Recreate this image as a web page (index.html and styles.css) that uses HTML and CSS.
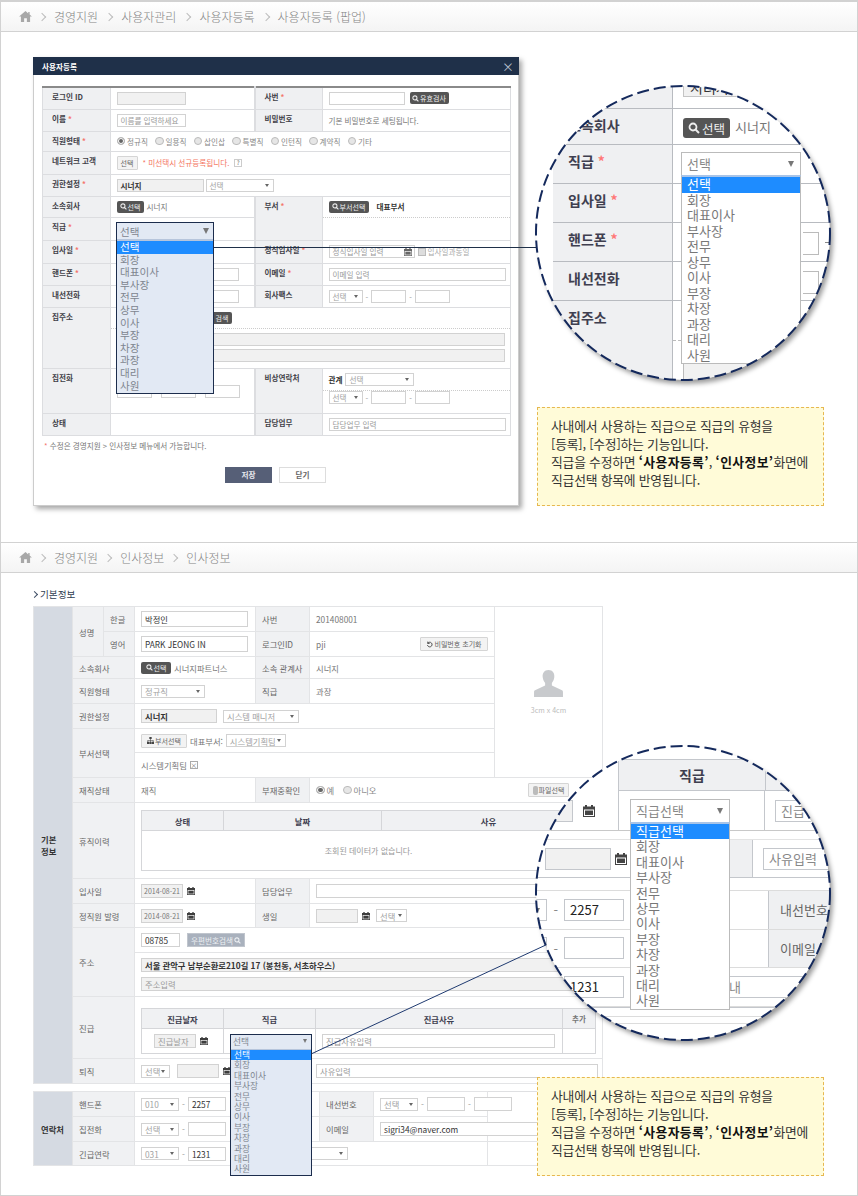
FILE: index.html
```html
<!DOCTYPE html>
<html lang="ko">
<head>
    <meta charset="utf-8">
    <title>사용자등록 / 인사정보</title>
    <link rel="stylesheet" href="styles.css">
</head>
<body>
    <svg class="defs" width="0" height="0">
        <symbol id="i-home" viewBox="0 0 14 12"><path d="M7 0 0 6h2v6h3.500V8h3v4H12V6h2l-2.500-2.100V1h-1.500v1.600z"/></symbol>
        <symbol id="i-search" viewBox="0 0 12 12"><circle cx="5" cy="5" r="3.500" fill="none" stroke="currentColor" stroke-width="1.800"/><path d="m7.500 7.500 3.500 3.500" stroke="currentColor" stroke-width="2"/></symbol>
        <symbol id="i-cal" viewBox="0 0 12 12"><path d="M2 0h2v1.500h4V0h2v1.500h2V12H0V1.500h2zM1 4.500V11h10V4.500z"/><path d="M2 5.500h8v4.500H2z"/></symbol>
    </svg>

    <!-- 사용자등록 (팝업) -->
    <section class="panel panel-top">
        <div class="crumbs">
            <svg class="home"><use href="#i-home"/></svg>
            <i class="sep"></i><span>경영지원</span>
            <i class="sep"></i><span>사용자관리</span>
            <i class="sep"></i><span>사용자등록</span>
            <i class="sep"></i><span>사용자등록 (팝업)</span>
        </div>
        <div class="modal">
            <div class="modal-head"><b>사용자등록</b><span class="modal-x">×</span></div>
            <div class="modal-body">
                <table class="form">
                    <colgroup><col class="c68"><col class="c144"><col class="c68"><col></colgroup>
                    <tr class="h22">
                        <th>로그인 ID</th>
                        <td><div class="cell"><span class="in gray w69"></span></div></td>
                        <th>사번 <i>*</i></th>
                        <td><div class="cell gap5"><span class="in w76"></span><span class="btn w39"><svg class="ic"><use href="#i-search"/></svg>유효검사</span></div></td>
                    </tr>
                    <tr class="h22">
                        <th>이름 <i>*</i></th>
                        <td><div class="cell"><span class="in w69">이름를 입력하세요</span></div></td>
                        <th>비밀번호</th>
                        <td><div class="cell txt">기본 비밀번호로 세팅됩니다.</div></td>
                    </tr>
                    <tr class="h20">
                        <th>직원형태 <i>*</i></th>
                        <td colspan="3"><div class="cell radios">
                            <span class="rad on">정규직</span><span class="rad">일용직</span><span class="rad">삽인삽</span><span class="rad">특별직</span><span class="rad">인턴직</span><span class="rad">계약직</span><span class="rad">기타</span>
                        </div></td>
                    </tr>
                    <tr class="h23">
                        <th>네트워크 고객</th>
                        <td colspan="3"><div class="cell"><span class="btn-w w21">선택</span><span class="warn">* 미선택시 선규등록됩니다.</span><span class="help">?</span></div></td>
                    </tr>
                    <tr class="h22">
                        <th>권한설정 <i>*</i></th>
                        <td colspan="3"><div class="cell tight"><span class="in gray strong w87">시너지</span><span class="sel w68">선택</span></div></td>
                    </tr>
                    <tr class="h21">
                        <th>소속회사</th>
                        <td><div class="cell"><span class="btn w27"><svg class="ic"><use href="#i-search"/></svg>선택</span><span class="txt">시너지</span></div></td>
                        <th rowspan="2">부서 <i>*</i></th>
                        <td rowspan="2" class="split">
                            <div class="cell part p21"><span class="btn w40"><svg class="ic"><use href="#i-search"/></svg>부서선택</span><b class="strong gap3">대표부서</b></div>
                            <div class="part p22"></div>
                        </td>
                    </tr>
                    <tr class="h22">
                        <th>직급 <i>*</i></th>
                        <td></td>
                    </tr>
                    <tr class="h23">
                        <th>입사일 <i>*</i></th>
                        <td></td>
                        <th>정식입사일 <i>*</i></th>
                        <td><div class="cell"><span class="in w86 has-cal">정식입사일 입력<svg class="ic-cal"><use href="#i-cal"/></svg></span><span class="check">입사일과동일</span></div></td>
                    </tr>
                    <tr class="h22">
                        <th>핸드폰 <i>*</i></th>
                        <td><div class="cell end"><span class="in w35"></span></div></td>
                        <th>이메일 <i>*</i></th>
                        <td><div class="cell"><span class="in w177">이메일 입력</span></div></td>
                    </tr>
                    <tr class="h22">
                        <th>내선전화</th>
                        <td><div class="cell end"><span class="in w35"></span></div></td>
                        <th>회사팩스</th>
                        <td><div class="cell phone"><span class="sel w34">선택</span>-<span class="in w35"></span>-<span class="in w35"></span></div></td>
                    </tr>
                    <tr class="h61">
                        <th>집주소</th>
                        <td colspan="3" class="split">
                            <div class="cell part p21"><span class="btn w60 btn-end">검색</span></div>
                            <div class="part addr"><span class="in gray"></span><span class="in gray"></span></div>
                        </td>
                    </tr>
                    <tr class="h45">
                        <th>집전화</th>
                        <td><div class="cell low"><span class="in w35"></span><span class="in w35"></span><span class="in w35"></span></div></td>
                        <th>비상연락처</th>
                        <td class="split">
                            <div class="cell part p22"><b class="strong">관계</b><span class="sel w69">선택</span></div>
                            <div class="cell phone"><span class="sel w34">선택</span>-<span class="in w35"></span>-<span class="in w35"></span></div>
                        </td>
                    </tr>
                    <tr class="h22">
                        <th>상태</th>
                        <td></td>
                        <th>담당업무</th>
                        <td><div class="cell"><span class="in w177">담당업무 입력</span></div></td>
                    </tr>
                </table>
                <p class="note"><i>*</i> 수정은 경영지원 &gt; 인사정보 메뉴에서 가능합니다.</p>
                <div class="actions"><span class="save">저장</span><span class="close">닫기</span></div>
            </div>
        </div>

        <div class="wire"></div>
        <div class="drop drop-a">
            <div class="drop-head">선택</div>
            <ul>
                <li class="cur">선택</li><li>회장</li><li>대표이사</li><li>부사장</li><li>전무</li><li>상무</li><li>이사</li><li>부장</li><li>차장</li><li>과장</li><li>대리</li><li>사원</li>
            </ul>
        </div>

        <div class="lens lens-a">
            <div class="lens-clip">
                <div class="la-rows">
                    <div class="la-row la-0"><div class="la-lab"></div><div class="la-val"><span class="la-in">시너지</span></div></div>
                    <div class="la-row la-1"><div class="la-lab">소속회사</div><div class="la-val"><span class="la-btn"><svg class="ic-l"><use href="#i-search"/></svg>선택</span><span class="la-txt">시너지</span></div></div>
                    <div class="la-row la-2"><div class="la-lab">직급 <i>*</i></div><div class="la-val"></div></div>
                    <div class="la-row la-2"><div class="la-lab">입사일 <i>*</i></div><div class="la-val"></div></div>
                    <div class="la-row la-2"><div class="la-lab">핸드폰 <i>*</i></div><div class="la-val la-end"><span class="la-box"></span><span class="la-dash"></span></div></div>
                    <div class="la-row la-2"><div class="la-lab">내선전화</div><div class="la-val la-end"><span class="la-box"></span></div></div>
                    <div class="la-row la-3"><div class="la-lab">집주소</div><div class="la-val la-addr"></div></div>
                </div>
                <div class="drop drop-b">
                    <div class="drop-head">선택</div>
                    <ul>
                        <li class="cur">선택</li><li>회장</li><li>대표이사</li><li>부사장</li><li>전무</li><li>상무</li><li>이사</li><li>부장</li><li>차장</li><li>과장</li><li>대리</li><li>사원</li>
                    </ul>
                </div>
            </div>
            <svg class="lens-ring" viewBox="0 0 298 298"><circle cx="149" cy="149" r="147"/></svg>
        </div>

        <div class="memo memo-a">
            사내에서 사용하는 직급으로 직급의 유형을<br>
            [등록], [수정]하는 기능입니다.<br>
            직급을 수정하면 <b>‘사용자등록’</b>, <b>‘인사정보’</b>화면에<br>
            직급선택 항목에 반영됩니다.
        </div>
    </section>

    <!-- 인사정보 -->
    <section class="panel panel-bottom">
        <div class="crumbs crumbs-b">
            <svg class="home"><use href="#i-home"/></svg>
            <i class="sep"></i><span>경영지원</span>
            <i class="sep"></i><span>인사정보</span>
            <i class="sep"></i><span>인사정보</span>
        </div>
        <div class="hr-body">
            <h3 class="hr-title"><i class="sep sep-dark"></i>기본정보</h3>
            <table class="hr">
                <colgroup><col class="c39"><col class="c31"><col class="c31"><col class="c121"><col class="c54"><col class="c185"><col class="c108"></colgroup>
                <tr class="h25">
                    <th class="group" rowspan="15">기본<br>정보</th>
                    <th rowspan="2">성명</th><th class="ctr">한글</th>
                    <td><div class="cell"><span class="in dark w107">박정인</span></div></td>
                    <th>사번</th><td><div class="cell txt">201408001</div></td>
                    <td rowspan="7" class="photo">
                        <svg class="avatar" viewBox="0 0 30 28"><path d="M15 0c-4.500 0-6.500 3.500-6 7.500.3 2.500 1.300 4.500 2.500 6v2.500L1 21c-.7.500-1 1-1 2v5h30v-5c0-1-.3-1.500-1-2l-10.500-5v-2.500c1.200-1.500 2.200-3.500 2.500-6C21.500 3.500 19.500 0 15 0z"/></svg>
                        <span>3cm x 4cm</span>
                    </td>
                </tr>
                <tr class="h25">
                    <th class="ctr">영어</th>
                    <td><div class="cell"><span class="in dark w107">PARK JEONG IN</span></div></td>
                    <th>로그인ID</th>
                    <td><div class="cell txt"><span>pji</span><span class="btn-w w68 push"><svg class="ic" viewBox="0 0 12 12"><path d="M3 4a4 4 0 1 1-.5 3M3 1v3.200h3.200" fill="none" stroke="#333" stroke-width="1.400"/></svg>비밀번호 초기화</span></div></td>
                </tr>
                <tr class="h22">
                    <th colspan="2">소속회사</th>
                    <td><div class="cell"><span class="btn w30"><svg class="ic"><use href="#i-search"/></svg>선택</span><span class="txt">시너지파트너스</span></div></td>
                    <th>소속 관계사</th><td><div class="cell txt">시너지</div></td>
                </tr>
                <tr class="h25">
                    <th colspan="2">직원형태</th>
                    <td><div class="cell"><span class="sel w64">정규직</span></div></td>
                    <th>직급</th><td><div class="cell txt">과장</div></td>
                </tr>
                <tr class="h25">
                    <th colspan="2">권한설정</th>
                    <td colspan="3"><div class="cell tight6"><span class="in gray strong w76">시너지</span><span class="sel w76">시스템 매니저</span></div></td>
                </tr>
                <tr class="h24">
                    <th colspan="2" rowspan="2">부서선택</th>
                    <td colspan="3"><div class="cell"><span class="btn-w w46"><svg class="ic" viewBox="0 0 12 12"><path d="M4 0h4v3.500H6.500v1.500H11v3h1v4H8.500V8H10V6H6.500v2H8v4H4V8h1.500V6H2v2h1.500v4H0V8h1V5h4.500V3.500H4z" fill="#444"/></svg>부서선택</span><span class="txt">대표부서:</span><span class="sel w60">시스템기획팀</span></div></td>
                </tr>
                <tr class="h25">
                    <td colspan="3"><div class="cell txt">시스템기획팀<span class="xbox">×</span></div></td>
                </tr>
                <tr class="h25">
                    <th colspan="2">재직상태</th>
                    <td><div class="cell txt">재직</div></td>
                    <th>부재중확인</th>
                    <td colspan="2"><div class="cell radios wide"><span class="rad on">예</span><span class="rad">아니오</span><span class="btn-w w41 push pad33"><i class="clip"></i>파일선택</span></div></td>
                </tr>
                <tr class="h76">
                    <th colspan="2">휴직이력</th>
                    <td colspan="4" class="pad">
                        <table class="inner">
                            <colgroup><col class="c82"><col class="c158"><col></colgroup>
                            <tr class="h20"><th>상태</th><th>날짜</th><th>사유</th></tr>
                            <tr class="h40"><td colspan="3" class="empty">조회된 데이터가 없습니다.</td></tr>
                        </table>
                    </td>
                </tr>
                <tr class="h25">
                    <th colspan="2">입사일</th>
                    <td><div class="cell"><span class="in gray w42 date">2014-08-21</span><svg class="ic-cal-b"><use href="#i-cal"/></svg></div></td>
                    <th>담당업무</th>
                    <td colspan="2"><div class="cell"><span class="in w282"></span></div></td>
                </tr>
                <tr class="h24">
                    <th colspan="2">정직원 발령</th>
                    <td><div class="cell"><span class="in gray w42 date">2014-08-21</span><svg class="ic-cal-b"><use href="#i-cal"/></svg></div></td>
                    <th>생일</th>
                    <td colspan="2"><div class="cell"><span class="in gray w42"></span><svg class="ic-cal-b"><use href="#i-cal"/></svg><span class="sel w31">선택</span></div></td>
                </tr>
                <tr class="h25">
                    <th colspan="2" rowspan="2">주소</th>
                    <td colspan="4"><div class="cell"><span class="in dark w39">08785</span><span class="btn-b">우편번호검색<svg class="ic"><use href="#i-search"/></svg></span></div></td>
                </tr>
                <tr class="h44">
                    <td colspan="4"><div class="addr addr-b"><span class="in gray strong">서울 관악구 남부순환로210길 17 (봉천동, 서초하우스)</span><span class="in gray">주소입력</span></div></td>
                </tr>
                <tr class="h62">
                    <th colspan="2">진급</th>
                    <td colspan="4" class="pad pad-b">
                        <table class="inner">
                            <colgroup><col class="c82"><col class="c92"><col><col class="c33"></colgroup>
                            <tr class="h20"><th>진급날자</th><th>직급</th><th>진급사유</th><th class="soft">추가</th></tr>
                            <tr class="h25">
                                <td><div class="cell ctrd"><span class="in gray w42">진급날자</span><svg class="ic-cal-b"><use href="#i-cal"/></svg></div></td>
                                <td></td>
                                <td><div class="cell"><span class="in w233">진급사유입력</span></div></td>
                                <td></td>
                            </tr>
                        </table>
                    </td>
                </tr>
                <tr class="h25">
                    <th colspan="2">퇴직</th>
                    <td><div class="cell"><span class="sel w29 gap-r">선택</span><span class="in gray w42"></span><svg class="ic-cal-b"><use href="#i-cal"/></svg></div></td>
                    <th></th>
                    <td colspan="2"><div class="cell"><span class="in w282">사유입력</span></div></td>
                </tr>
            </table>

            <table class="hr hr-contact">
                <colgroup><col class="c39"><col class="c62"><col class="c185"><col class="c54"><col></colgroup>
                <tr class="h25">
                    <th class="group" rowspan="3">연락처</th>
                    <th>핸드폰</th>
                    <td><div class="cell phone ph-b"><span class="sel w38">010</span>-<span class="in dark w38">2257</span></div></td>
                    <th>내선번호</th>
                    <td><div class="cell phone ph-b"><span class="sel w38">선택</span>-<span class="in w38"></span>-<span class="in w38"></span></div></td>
                </tr>
                <tr class="h25">
                    <th>집전화</th>
                    <td><div class="cell phone ph-b"><span class="sel w38">선택</span>-<span class="in w38"></span></div></td>
                    <th>이메일</th>
                    <td><div class="cell"><span class="in dark w216">sigri34@naver.com</span></div></td>
                </tr>
                <tr class="h24">
                    <th>긴급연락</th>
                    <td colspan="3"><div class="cell phone ph-b"><span class="sel w38">031</span>-<span class="in dark w38">1231</span><span class="sel w91 gap28"></span></div></td>
                    <td></td>
                </tr>
            </table>
        </div>

        <svg class="wire-b" width="240" height="112"><line x1="1" y1="111" x2="238" y2="1"/></svg>
        <div class="drop drop-c">
            <div class="drop-head">선택</div>
            <ul>
                <li class="cur">선택</li><li>회장</li><li>대표이사</li><li>부사장</li><li>전무</li><li>상무</li><li>이사</li><li>부장</li><li>차장</li><li>과장</li><li>대리</li><li>사원</li>
            </ul>
        </div>

        <div class="lens lens-b">
            <div class="lens-clip">
                <div class="lb-a">
                    <div></div><div class="lb-head">직급</div><div class="lb-head lb-headr"></div>
                    <div class="lb-c1"><span class="lb-box gray"></span><svg class="ic-cal-l"><use href="#i-cal"/></svg></div>
                    <div class="lb-c2"></div>
                    <div class="lb-c3"><span class="lb-box">진급</span></div>
                </div>
                <div class="lb-b">
                    <div class="lb-c1b"><span class="lb-box gray lb-w66"></span><svg class="ic-cal-l"><use href="#i-cal"/></svg></div>
                    <div class="lb-lab"></div>
                    <div class="lb-c3"><span class="lb-box lb-w70">사유입력</span></div>
                </div>
                <div class="lb-c">
                    <div class="lb-row"><div class="lb-val"><span class="lb-sel lb-arrow"></span><span class="lb-dash">-</span><span class="lb-box dark">2257</span></div><div class="lb-lab2">내선번호</div></div>
                    <div class="lb-row"><div class="lb-val"><span class="lb-sel"></span><span class="lb-dash">-</span><span class="lb-box"></span></div><div class="lb-lab2">이메일</div></div>
                    <div class="lb-row"><div class="lb-val"><span class="lb-box dark">1231</span><span class="lb-box lb-far">안내</span></div><div></div></div>
                </div>
                <div class="lb-foot"></div>
                <div class="drop drop-d">
                    <div class="drop-head">직급선택</div>
                    <ul>
                        <li class="cur">직급선택</li><li>회장</li><li>대표이사</li><li>부사장</li><li>전무</li><li>상무</li><li>이사</li><li>부장</li><li>차장</li><li>과장</li><li>대리</li><li>사원</li>
                    </ul>
                </div>
            </div>
            <svg class="lens-ring" viewBox="0 0 298 298"><circle cx="149" cy="149" r="147"/></svg>
        </div>

        <div class="memo memo-b">
            사내에서 사용하는 직급으로 직급의 유형을<br>
            [등록], [수정]하는 기능입니다.<br>
            직급을 수정하면 <b>‘사용자등록’</b>, <b>‘인사정보’</b>화면에<br>
            직급선택 항목에 반영됩니다.
        </div>
    </section>
</body>
</html>
```

FILE: styles.css
```css
* {
    box-sizing: border-box;
}
html, body {
    margin: 0;
    padding: 0;
}
body {
    width: 858px;
    height: 1196px;
    overflow: hidden;
    background: #fff;
    font-family: "Noto Sans CJK KR", "Noto Sans", sans-serif;
    color: #666;
}
.defs {
    position: absolute;
}

/* panels and breadcrumb */
.panel {
    position: relative;
    border: 1px solid #d2d2d2;
    border-bottom: 0;
    overflow: hidden;
}
.panel-top {
    height: 542px;
    border-top-width: 2px;
}
.panel-bottom {
    height: 654px;
    border-bottom: 1px solid #d2d2d2;
}
.crumbs {
    display: flex;
    align-items: center;
    height: 30px;
    padding-left: 18px;
    background: linear-gradient(#fff, #f4f4f4);
    border-bottom: 1px solid #d2d2d2;
    font-size: 12px;
    font-weight: 300;
    color: #858585;
}
.crumbs span {
    margin-right: 8px;
}
.crumbs-b span {
    margin-right: 7px;
}
.home {
    width: 13px;
    height: 11px;
    fill: #a8a8a8;
    margin-right: 7px;
}
.sep {
    display: inline-block;
    width: 6px;
    height: 6px;
    margin-right: 9px;
    border-top: 1px solid #bdbdbd;
    border-right: 1px solid #bdbdbd;
    transform: rotate(45deg);
}
.sep-dark {
    width: 5px;
    height: 5px;
    margin: 0 3px 0 -1px;
    border-width: 1.500px;
    border-color: #3d4c63;
}

/* popup window */
.modal {
    width: 486px;
    height: 449px;
    margin: 25px 0 0 32px;
    background: #fff;
    border: 1px solid #ccc;
    box-shadow: 3px 3px 5px rgba(0, 0, 0, 0.35);
}
.modal-head {
    display: flex;
    justify-content: space-between;
    align-items: center;
    height: 18px;
    margin: -1px -1px 0;
    padding: 0 5px 0 9px;
    background: #1f3049;
    color: #fff;
    font-size: 7.600px;
}
.modal-x {
    font-size: 12px;
    color: #b9c0cc;
}
.modal-body {
    padding: 11px 7px 0 8px;
}
table {
    border-collapse: collapse;
    table-layout: fixed;
}
.form {
    width: 469px;
    border-top: 2px solid #8a8a8a;
    border-bottom: 1px solid #c6c8cc;
    font-size: 7.600px;
}
.c68 { width: 68px; }
.c144 { width: 144px; }
.c39 { width: 39px; }
.c31 { width: 31px; }
.c121 { width: 121px; }
.c54 { width: 54px; }
.c185 { width: 185px; }
.c108 { width: 108px; }
.c62 { width: 62px; }
.c82 { width: 82px; }
.c158 { width: 158px; }
.c92 { width: 92px; }
.c33 { width: 33px; }
.h20 { height: 20px; }
.h21 { height: 21px; }
.h22 { height: 22px; }
.h23 { height: 23px; }
.h24 { height: 24px; }
.h25 { height: 25px; }
.h40 { height: 40px; }
.h44 { height: 44px; }
.h45 { height: 45px; }
.h61 { height: 61px; }
.h62 { height: 62px; }
.h76 { height: 76px; }
.form th, .form td {
    padding: 0;
    border: 1px solid #dcdde0;
}
.form th {
    padding: 3px 0 0 9px;
    background: #eff0f2;
    color: #3f3f48;
    text-align: left;
    vertical-align: top;
    font-weight: 700;
}
.form tr > th:not(:first-child) {
    border-left: 2px solid #dcdde0;
}
.form th i, .note i {
    color: #f4766b;
    font-style: normal;
}
.cell {
    display: flex;
    align-items: center;
    gap: 3px;
    padding: 0 5.500px;
    min-width: 0;
}
.tight { gap: 2px; }
.tight6 { gap: 6px; }
.gap5 { gap: 5px; }
.end { justify-content: flex-end; padding-right: 15px; }
.low { padding-top: 2px; gap: 9px; justify-content: flex-start; }
.txt { color: #777; gap: 3px; }
.gap3 { margin-left: 5px; }
.push { margin-left: auto; }
.in {
    display: flex;
    align-items: center;
    flex: none;
    height: 13px;
    padding: 0 3px;
    background: #fff;
    border: 1px solid #d2d2d2;
    color: #999;
    white-space: nowrap;
}
.gray { background: #f1f1f1; }
.dark { color: #333; }
.strong, .in.strong { color: #333; font-weight: 700; }
.w21 { width: 21px; }
.w27 { width: 27px; }
.w29 { width: 29px; }
.w30 { width: 30px; }
.w31 { width: 31px; }
.w34 { width: 34px; }
.w35 { width: 35px; }
.w38 { width: 38px; }
.w39 { width: 39px; }
.w40 { width: 40px; }
.w41 { width: 41px; }
.w42 { width: 42px; }
.w46 { width: 46px; }
.w60 { width: 60px; }
.w64 { width: 64px; }
.w68 { width: 68px; }
.w69 { width: 69px; }
.w76 { width: 76px; }
.w86 { width: 86px; }
.w87 { width: 87px; }
.w91 { width: 91px; }
.w107 { width: 107px; }
.w177 { width: 177px; }
.w216 { width: 216px; }
.w233 { width: 233px; }
.w282 { width: 282px; }
.btn, .btn-w {
    display: inline-flex;
    align-items: center;
    justify-content: center;
    flex: none;
    height: 12px;
    font-size: 7px;
    white-space: nowrap;
}
.btn {
    background: #555;
    color: #eee;
    border-radius: 2px;
}
.btn-end {
    justify-content: flex-end;
    margin-left: 55px;
    padding-right: 3px;
}
.btn-w {
    height: 14px;
    background: #f3f3f3;
    border: 1px solid #d5d5d5;
    border-radius: 1px;
    color: #666;
}
.btn-b {
    display: inline-flex;
    align-items: center;
    height: 14px;
    margin-left: 4px;
    padding: 0 3px;
    background: #a9b1bd;
    border: 1px solid #c0c5cd;
    color: #edf0f3;
    font-size: 7.600px;
}
.ic {
    width: 7px;
    height: 7px;
    margin-right: 1px;
    flex: none;
}
.btn-b .ic { margin: 0 0 0 1px; }
.sel {
    position: relative;
    display: flex;
    align-items: center;
    flex: none;
    height: 13px;
    padding: 0 3px;
    background: #fff;
    border: 1px solid #d2d2d2;
    color: #a2a2a2;
    white-space: nowrap;
}
.sel::after {
    content: "";
    position: absolute;
    right: 4px;
    top: 4px;
    border: 2.500px solid transparent;
    border-top: 3.500px solid #666;
    border-bottom: 0;
}
.gap-r { margin-right: 4px; }
.radios {
    gap: 0;
}
.rad {
    display: flex;
    align-items: center;
    gap: 2px;
    width: 38.500px;
    color: #888;
    flex: none;
}
.rad::before {
    content: "";
    width: 6.500px;
    height: 6.500px;
    border: 1px solid #bbb;
    border-radius: 50%;
    background: #e6e6e6;
    flex: none;
}
.rad.on::before {
    background: #666;
    box-shadow: inset 0 0 0 1px #fff;
}
.wide .rad { width: 27px; }
.wide .rad + .rad { width: 40px; }
.pad33 { margin-right: 27px; }
.warn {
    margin-left: 2px;
    color: #f4765f;
}
.help {
    display: inline-flex;
    align-items: center;
    justify-content: center;
    width: 8px;
    height: 8px;
    margin-left: 2px;
    border: 1px solid #ccc;
    color: #555;
    font-size: 6px;
}
.split {
    vertical-align: top;
}
.part {
    border-bottom: 1px dotted #ccc;
}
.p21 { height: 21px; }
.p22 { height: 22px; border-bottom: 0; }
td > .p22.cell { height: 22px; border-bottom: 1px dotted #ccc; }
.addr {
    display: flex;
    flex-direction: column;
    gap: 3px;
    padding: 4px 5px 0 6px;
    border: 0;
}
.addr .in { width: 100%; }
.addr-b {
    gap: 5px;
    padding: 0 6px;
}
.addr-b .in { height: 15px; }
.phone {
    gap: 3px;
    color: #999;
}
.has-cal {
    position: relative;
}
.ic-cal {
    position: absolute;
    right: 2px;
    top: 2px;
    width: 8px;
    height: 8px;
    fill: #666;
}
.check {
    display: flex;
    align-items: center;
    gap: 2px;
    color: #aaa;
}
.check::before {
    content: "";
    width: 6px;
    height: 6px;
    background: #ddd;
    border: 1px solid #bbb;
}
.note {
    margin: 5px 0 0 2px;
    font-size: 7.600px;
    line-height: 10px;
    color: #777;
}
.actions {
    display: flex;
    justify-content: center;
    gap: 7px;
    margin: 16px 0 0 -2px;
}
.save, .close {
    display: flex;
    align-items: center;
    justify-content: center;
    width: 47px;
    height: 16px;
    font-size: 7.600px;
    font-weight: 700;
}
.save {
    background: #565f77;
    color: #e8e8ee;
}
.close {
    background: #fff;
    border: 1px solid #ddd;
    color: #666;
}

/* dropdowns lying over the forms */
.drop ul {
    margin: 0;
    padding: 0;
    list-style: none;
}
.drop li {
    padding-left: 3px;
    white-space: nowrap;
}
.drop li.cur {
    background: #1e8cff;
    color: #fff;
}
.drop-head {
    position: relative;
}
.drop-head::after {
    content: "";
    position: absolute;
    top: 50%;
    right: 6px;
    margin-top: -3px;
    border: 3.500px solid transparent;
    border-top: 6px solid #777;
    border-bottom: 0;
}
.drop-a, .drop-c {
    position: absolute;
    background: #e2e9f4;
    border: 1.500px solid #1c2d4d;
    color: #7e858f;
}
.drop-a {
    left: 115px;
    top: 220px;
    width: 98px;
    height: 172px;
    font-size: 10.600px;
    line-height: 12.600px;
}
.drop-a .drop-head {
    height: 18px;
    padding: 2px 0 0 3px;
    line-height: 14px;
    font-size: 10.600px;
    border-bottom: 2px solid #b6c5dc;
}
.drop-a .drop-head::after { right: 4px; }
.drop-c {
    left: 229px;
    top: 491px;
    width: 82px;
    height: 142px;
    font-size: 8.700px;
    line-height: 10.400px;
}
.drop-c .drop-head {
    height: 15px;
    padding: 1px 0 0 2px;
    line-height: 12px;
    border-bottom: 1px solid #b6c5dc;
}
.drop-c .drop-head::after { right: 4px; border-width: 2.500px; border-top-width: 4px; }
.wire {
    position: absolute;
    left: 212px;
    top: 245px;
    width: 324px;
    height: 1px;
    background: #1f3049;
}
.wire-b {
    position: absolute;
    left: 309px;
    top: 400px;
    stroke: #1f3a70;
    stroke-width: 1;
}

/* magnifier circles */
.lens {
    position: absolute;
    width: 298px;
    height: 298px;
}
.lens-a {
    left: 533px;
    top: 82px;
}
.lens-b {
    left: 533px;
    top: 201px;
}
.lens-clip {
    position: absolute;
    inset: 2px;
    background: #fff;
    border-radius: 50%;
    overflow: hidden;
    box-shadow: 3px 4px 5px rgba(0, 0, 0, 0.4);
}
.lens-ring {
    position: absolute;
    inset: 0;
    fill: none;
    stroke: #14295c;
    stroke-width: 2;
    stroke-dasharray: 12 5;
}
.la-rows {
    position: absolute;
    left: 17px;
    top: -7px;
    width: 300px;
    font-size: 14px;
}
.la-row {
    display: flex;
    border-bottom: 1px solid #b8bbc0;
}
.la-0 { height: 30px; }
.la-1 { height: 36px; }
.la-2 { height: 39px; }
.la-3 { height: 140px; border-bottom: 0; }
.la-lab {
    width: 120px;
    padding: 6px 0 0 15px;
    background: #eff0f2;
    border-right: 1px solid #b8bbc0;
    color: #3f3f50;
    font-weight: 700;
    line-height: 20px;
}
.la-lab i {
    font-style: normal;
    color: #f77;
}
.la-val {
    position: relative;
    flex: 1;
    display: flex;
    align-items: flex-start;
    padding: 9px 0 0 10px;
}
.la-val.la-end { padding-left: 130px; }
.la-in {
    display: flex;
    align-items: flex-end;
    width: 125px;
    height: 20px;
    margin-top: -11px;
    padding-left: 6px;
    background: #f1f1f1;
    border: 1px solid #c4c4c4;
    color: #333;
    font-size: 14px;
    line-height: 18px;
}
.la-btn {
    display: flex;
    align-items: center;
    width: 47px;
    height: 20px;
    padding-left: 5px;
    background: #555;
    border-radius: 3px;
    color: #eee;
    font-size: 12.500px;
}
.ic-l {
    width: 12px;
    height: 12px;
    margin-right: 2px;
}
.la-txt {
    margin-left: 5px;
    color: #777;
    font-size: 13px;
    line-height: 18px;
    font-weight: 400;
}
.la-box {
    width: 16px;
    height: 23px;
    background: #fff;
    border: 1px solid #bbb;
    border-left: 0;
}
.la-dash {
    width: 6px;
    height: 1px;
    margin: 10px 0 0 6px;
    background: #888;
}
.la-addr {
    border-left: 0;
}
.la-addr::before {
    content: "";
    position: absolute;
    left: 0;
    right: 0;
    top: 39px;
    border-top: 1px dashed #bbb;
}
.la-addr::after {
    content: "";
    position: absolute;
    left: 10px;
    top: 62px;
    width: 125px;
    height: 22px;
    border: 1px solid #bbb;
    background: #f1f1f1;
}
.drop-b, .drop-d {
    position: absolute;
    width: 120px;
    font-size: 13px;
    color: #777;
}
.drop-b {
    left: 145px;
    top: 66px;
    height: 212px;
}
.drop-b ul, .drop-d ul {
    background: #fff;
    border: 1px solid #bbb;
    border-top: 2px solid #a8c4e8;
}
.drop-b li, .drop-d li {
    height: 15.500px;
    padding-left: 5px;
    line-height: 13px;
}
.drop-b .drop-head, .drop-d .drop-head {
    height: 23px;
    padding: 3px 0 0 5px;
    line-height: 16px;
    background: #fff;
    border: 1px solid #bbb;
    border-bottom: 0;
    color: #888;
}

.lb-a, .lb-b, .lb-row {
    display: grid;
}
.lb-a {
    position: absolute;
    left: 0;
    top: 13px;
    width: 296px;
    grid-template-columns: 82px 147px 1fr;
    grid-template-rows: 32px 39px;
    border-bottom: 1px solid #c8c8c8;
}
.lb-head {
    display: flex;
    align-items: center;
    justify-content: center;
    background: #eff0f2;
    border-top: 1px solid #c4c7cc;
    border-bottom: 1px solid #c4c7cc;
    border-left: 1px solid #c4c7cc;
    color: #3f3f50;
    font-size: 14px;
    font-weight: 700;
}
.lb-c1 {
    display: flex;
    align-items: center;
    justify-content: flex-end;
    gap: 10px;
    padding-right: 23px;
}
.lb-c1 .lb-box { width: 50px; margin-left: -14px; }
.lb-c2 {
    border-left: 1px solid #c4c7cc;
    border-right: 1px solid #c4c7cc;
}
.lb-c3 {
    display: flex;
    align-items: center;
    padding-left: 10px;
}
.lb-box {
    display: flex;
    align-items: center;
    flex: none;
    width: 60px;
    height: 22px;
    padding-left: 5px;
    background: #fff;
    border: 1px solid #c4c7cc;
    color: #888;
    font-size: 13px;
}
.lb-box.gray { background: #f1f1f1; }
.lb-box.dark { color: #222; }
.lb-w66 { width: 66px; }
.lb-w70 { width: 70px; }
.lb-sel {
    position: relative;
    width: 30px;
    height: 22px;
    border: 1px solid #c4c7cc;
    border-left: 0;
}
.lb-arrow::after {
    content: "";
    position: absolute;
    right: 6px;
    top: 8px;
    border: 3.500px solid transparent;
    border-top: 6px solid #777;
    border-bottom: 0;
}
.ic-cal-l {
    width: 12px;
    height: 12px;
    flex: none;
    fill: #444;
}
.lb-b {
    position: absolute;
    left: 0;
    top: 93px;
    width: 296px;
    height: 39px;
    grid-template-columns: 193px 24px 1fr;
    border-bottom: 1px solid #c4c7cc;
    border-top: 1px solid #e3e3e3;
}
.lb-c1b {
    display: flex;
    align-items: center;
    gap: 4px;
    padding-left: 9px;
}
.lb-lab {
    background: #eff0f2;
    border-left: 1px solid #c4c7cc;
    border-right: 1px solid #c4c7cc;
}
.lb-c {
    position: absolute;
    left: 0;
    top: 144px;
    width: 296px;
    border-top: 1px solid #dcdcdc;
    border-bottom: 1px solid #c4c7cc;
}
.lb-row {
    grid-template-columns: 232px 1fr;
    height: 38.500px;
    border-bottom: 1px solid #dcdcdc;
}
.lb-val {
    position: relative;
    display: flex;
    align-items: center;
    justify-content: flex-end;
    gap: 6px;
    padding-right: 144px;
}
.lb-far {
    position: absolute;
    left: 175px;
    width: 120px;
    color: #888;
}
.lb-dash {
    color: #888;
    font-size: 13px;
}
.lb-lab2 {
    display: flex;
    align-items: center;
    padding-left: 11px;
    background: #eff0f2;
    border-left: 1px solid #c4c7cc;
    color: #666;
    font-size: 13px;
    white-space: nowrap;
}
.lb-foot {
    position: absolute;
    left: 0;
    right: 0;
    top: 270px;
    height: 8px;
    border-top: 1px solid #dcdcdc;
    border-bottom: 1px solid #dcdcdc;
}
.drop-d {
    left: 94px;
    top: 53px;
    width: 100px;
}
.drop-d li {
    height: 15.400px;
}

/* memo boxes */
.memo {
    position: absolute;
    left: 536px;
    width: 287px;
    height: 99px;
    padding: 9px 0 0 13px;
    background: #fffbd8;
    border: 1px dashed #e6b84f;
    font-size: 12.800px;
    line-height: 18px;
    letter-spacing: -0.200px;
    color: #333;
    white-space: nowrap;
}
.memo b {
    color: #111;
    letter-spacing: 0.400px;
}
.memo-a { top: 405px; }
.memo-b { top: 534px; }

/* 인사정보 */
.hr-body {
    padding: 11px 0 0 32px;
}
.hr-title {
    display: flex;
    align-items: center;
    margin: 0 0 2px;
    height: 20px;
    font-size: 9.600px;
    line-height: 20px;
    font-weight: 400;
    color: #2f3d52;
}
.hr {
    width: 569px;
    font-size: 8.300px;
    color: #777;
    border-top: 1px solid #dfe0e2;
    border-right: 1px solid #dfe0e2;
}
.hr > tbody > tr > th, .hr > tbody > tr > td {
    padding: 0;
    border: 1px solid #e3e4e6;
}
.hr > tbody > tr > th {
    padding-left: 6px;
    background: #f0f1f3;
    color: #666;
    text-align: left;
    font-weight: 400;
    white-space: nowrap;
}
.hr > tbody > tr > th.group {
    padding-left: 7px;
    background: #d5dae2;
    color: #333;
    font-weight: 700;
    line-height: 12px;
}
.hr .in {
    height: 14px;
}
.hr .cell {
    padding: 0 6px;
}
.hr .w107 {
    height: 16px;
}
.hr .date {
    padding: 0 2px;
    font-size: 7px;
    color: #777;
}
.photo {
    text-align: center;
    color: #bbb;
    font-size: 7px;
}
.photo span {
    display: block;
    margin-top: 8px;
}
.avatar {
    display: block;
    width: 29px;
    height: 27px;
    margin: 0 auto;
    fill: #c8cacd;
}
.xbox {
    display: inline-flex;
    align-items: center;
    justify-content: center;
    width: 8px;
    height: 8px;
    border: 1px solid #aaa;
    font-size: 7px;
}
.clip {
    width: 5px;
    height: 9px;
    margin-right: 1px;
    background: #bbb;
    border-radius: 2px;
}
.hr td.pad {
    padding: 0 6px;
}
.hr td.pad-b {
    padding-top: 7px;
}
.inner {
    width: 100%;
    border: 1px solid #d5d6d9;
}
.inner th, .inner td {
    padding: 0;
    border: 1px solid #d5d6d9;
    text-align: center;
}
.inner th {
    background: #f0f1f3;
    color: #3f3f50;
    font-weight: 700;
}
.inner th.soft {
    color: #777;
    font-size: 7.500px;
}
.inner .empty {
    color: #999;
    font-size: 8px;
}
.ctrd {
    justify-content: center;
}
.ic-cal-b {
    width: 8px;
    height: 8px;
    fill: #3d3d3d;
    flex: none;
    margin: 0 3px 0 1px;
}
.hr-contact {
    margin-top: 7px;
}
.ph-b {
    gap: 3px;
}
.gap28 {
    margin-left: 28px;
}
```
